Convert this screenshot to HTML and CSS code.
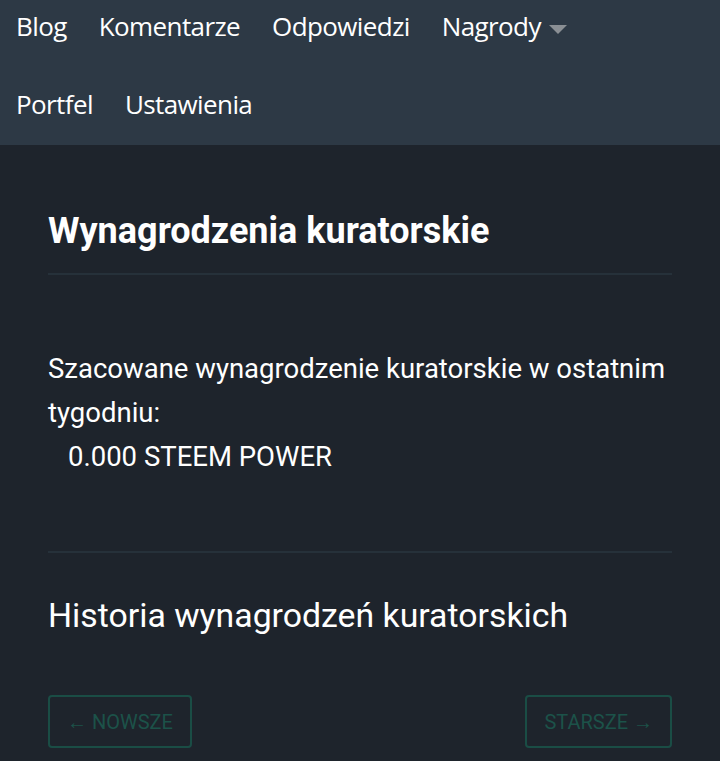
FILE: index.html
```html
<!DOCTYPE html>
<html lang="pl">
<head>
  <meta charset="UTF-8">
  <meta name="viewport" content="width=device-width, initial-scale=1">
  <title>Wynagrodzenia kuratorskie</title>
  <link rel="stylesheet" href="styles.css">
</head>
<body>

  <!-- Menu -->
  <nav class="menu">
    <a href="#">Blog</a>
    <a href="#">Komentarze</a>
    <a href="#">Odpowiedzi</a>
    <a href="#" class="dropdown">Nagrody <span class="caret"></span></a>
    <span class="break"></span>
    <a href="#">Portfel</a>
    <a href="#">Ustawienia</a>
  </nav>

  <!-- Treść -->
  <main class="content">
    <h1>Wynagrodzenia kuratorskie</h1>
    <hr>
    <p class="estimate">
      Szacowane wynagrodzenie kuratorskie w ostatnim tygodniu:<br>
      <span class="amount">0.000 STEEM POWER</span>
    </p>
    <hr>
    <h2>Historia wynagrodzeń kuratorskich</h2>
    <div class="pager">
      <button class="pager-btn">&larr; Nowsze</button>
      <button class="pager-btn">Starsze &rarr;</button>
    </div>
  </main>

</body>
</html>
```
FILE: styles.css
```css
* { margin:0; padding:0; box-sizing:border-box; }
html, body { width:100%; height:100%; background:#1e242c; color:#fff; font-family:Roboto, sans-serif; }
body { overflow:hidden; }

.menu {
  background:#2d3945;
  display:flex;
  flex-wrap:wrap;
  padding:0 16px;
  height:145px;
  align-content:flex-start;
}
.menu a {
  color:#fff;
  text-decoration:none;
  font-family:'Open Sans', sans-serif;
  font-size:26px;
  letter-spacing:-0.6px;
  line-height:52px;
  margin-right:32px;
  margin-bottom:26px;
}
.break { flex-basis:100%; height:0; }
.caret {
  display:inline-block;
  width:0; height:0;
  border-left:9px solid transparent;
  border-right:9px solid transparent;
  border-top:9px solid #8a8f94;
  vertical-align:middle;
  margin-left:2px;
}

.content { padding:60px 48px 0; }
h1 {
  font-size:36px;
  font-weight:700;
  line-height:52px;
  margin-bottom:16px;
}
hr {
  border:none;
  border-top:2px solid #26313a;
}
.estimate {
  font-size:27.5px;
  line-height:44px;
  margin:72px 0 72px;
}
.amount { padding-left:20px; }
h2 {
  font-size:33.8px;
  font-weight:400;
  line-height:50px;
  margin-top:38px;
}
.pager {
  display:flex;
  justify-content:space-between;
  margin-top:54px;
}
.pager-btn {
  background:none;
  border:2px solid #1a4d45;
  border-radius:4px;
  color:#1c5249;
  font-family:Roboto, sans-serif;
  font-size:20px;
  text-transform:uppercase;
  height:53px;
  padding:0 17px;
}
```
